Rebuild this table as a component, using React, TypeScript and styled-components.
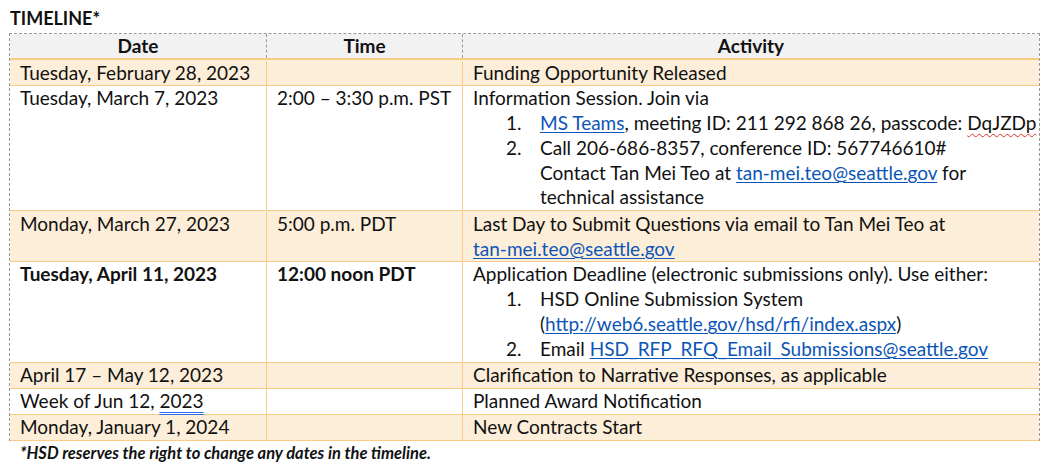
import React from "react";
import styled, { createGlobalStyle } from "styled-components";

const Global = createGlobalStyle`
  html, body { margin: 0; padding: 0; background: #fff; }
  body { font-family: "Lato", "Liberation Sans", sans-serif; color: #111; }
`;

const ORANGE = "#f9cc86";
const ROWBG = "#fdeed9";
const GRAY = "#9a9a9a";
const LINK = "#0b55b8";

const Page = styled.div`
  padding: 8px 0 0 9px;
  width: 1031px;
`;

const Title = styled.div`
  font-weight: 700;
  font-size: 18px;
  line-height: 20px;
  padding-left: 1px;
  margin-bottom: 5px;
`;

const Table = styled.div`
  border-left: 1px dashed ${GRAY};
  border-right: 1px dashed ${GRAY};
  border-top: 1px dashed ${GRAY};
  font-size: 19px;
`;

const Row = styled.div<{ $shade?: boolean; $header?: boolean }>`
  display: grid;
  grid-template-columns: 256px 196px 1fr;
  background: ${(p) => (p.$header ? "#f2f2f2" : p.$shade ? ROWBG : "#fff")};
  border-bottom: ${(p) => (p.$header ? "2px" : "1px")} solid ${ORANGE};
  line-height: ${(p) => (p.$header ? "24px" : "24.8px")};
  padding-top: ${(p) => (p.$shade && !p.$header ? "0.5px" : "0")};
`;

const Cell = styled.div<{ $first?: boolean; $header?: boolean; $bold?: boolean }>`
  padding: 0 10px;
  border-left: ${(p) =>
    p.$first ? "none" : p.$header ? `1px dashed ${GRAY}` : `1px solid ${ORANGE}`};
  font-weight: ${(p) => (p.$header || p.$bold ? 700 : 400)};
  text-align: ${(p) => (p.$header ? "center" : "left")};
  white-space: nowrap;
`;

const Link = styled.a`
  color: ${LINK};
  text-decoration: underline;
  text-underline-offset: 2px;
  text-decoration-thickness: 1px;
`;

const List = styled.div`
  padding-left: 33px;
`;

const Item = styled.div`
  display: grid;
  grid-template-columns: 34px 1fr;
`;

const Squiggle = styled.span`
  text-decoration: underline wavy #e0302a;
  text-decoration-thickness: 1px;
  text-underline-offset: 3px;
`;

const Grammar = styled.span`
  text-decoration: underline double #2f68e8;
  text-decoration-thickness: 1px;
  text-underline-offset: 4px;
`;

const Note = styled.div`
  font-weight: 700;
  font-style: italic;
  font-size: 16.5px;
  line-height: 22px;
  padding-left: 11px;
  padding-top: 1px;
`;

export default function App() {
  return (
    <>
      <Global />
      <Page>
        <Title>TIMELINE*</Title>
        <Table>
          <Row $header>
            <Cell $first $header>Date</Cell>
            <Cell $header>Time</Cell>
            <Cell $header>Activity</Cell>
          </Row>
          <Row $shade>
            <Cell $first>Tuesday, February 28, 2023</Cell>
            <Cell></Cell>
            <Cell>Funding Opportunity Released</Cell>
          </Row>
          <Row>
            <Cell $first>Tuesday, March 7, 2023</Cell>
            <Cell>2:00 – 3:30 p.m. PST</Cell>
            <Cell>
              <div>Information Session. Join via</div>
              <List>
                <Item>
                  <span>1.</span>
                  <span>
                    <Link href="#">MS Teams</Link>, meeting ID: 211 292 868 26, passcode:{" "}
                    <Squiggle>DqJZDp</Squiggle>
                  </span>
                </Item>
                <Item>
                  <span>2.</span>
                  <span>
                    Call 206-686-8357, conference ID: 567746610#
                    <br />
                    Contact Tan Mei Teo at <Link href="#">tan-mei.teo@seattle.gov</Link> for
                    <br />
                    technical assistance
                  </span>
                </Item>
              </List>
            </Cell>
          </Row>
          <Row $shade>
            <Cell $first>Monday, March 27, 2023</Cell>
            <Cell>5:00 p.m. PDT</Cell>
            <Cell>
              Last Day to Submit Questions via email to Tan Mei Teo at
              <br />
              <Link href="#">tan-mei.teo@seattle.gov</Link>
            </Cell>
          </Row>
          <Row>
            <Cell $first $bold>Tuesday, April 11, 2023</Cell>
            <Cell $bold>12:00 noon PDT</Cell>
            <Cell>
              <div>Application Deadline (electronic submissions only). Use either:</div>
              <List>
                <Item>
                  <span>1.</span>
                  <span>
                    HSD Online Submission System
                    <br />(<Link href="#">http://web6.seattle.gov/hsd/rfi/index.aspx</Link>)
                  </span>
                </Item>
                <Item>
                  <span>2.</span>
                  <span>
                    Email <Link href="#">HSD_RFP_RFQ_Email_Submissions@seattle.gov</Link>
                  </span>
                </Item>
              </List>
            </Cell>
          </Row>
          <Row $shade>
            <Cell $first>April 17 – May 12, 2023</Cell>
            <Cell></Cell>
            <Cell>Clarification to Narrative Responses, as applicable</Cell>
          </Row>
          <Row>
            <Cell $first>
              Week of Jun 12, <Grammar>2023</Grammar>
            </Cell>
            <Cell></Cell>
            <Cell>Planned Award Notification</Cell>
          </Row>
          <Row $shade>
            <Cell $first>Monday, January 1, 2024</Cell>
            <Cell></Cell>
            <Cell>New Contracts Start</Cell>
          </Row>
        </Table>
        <Note>*HSD reserves the right to change any dates in the timeline.</Note>
      </Page>
    </>
  );
}
